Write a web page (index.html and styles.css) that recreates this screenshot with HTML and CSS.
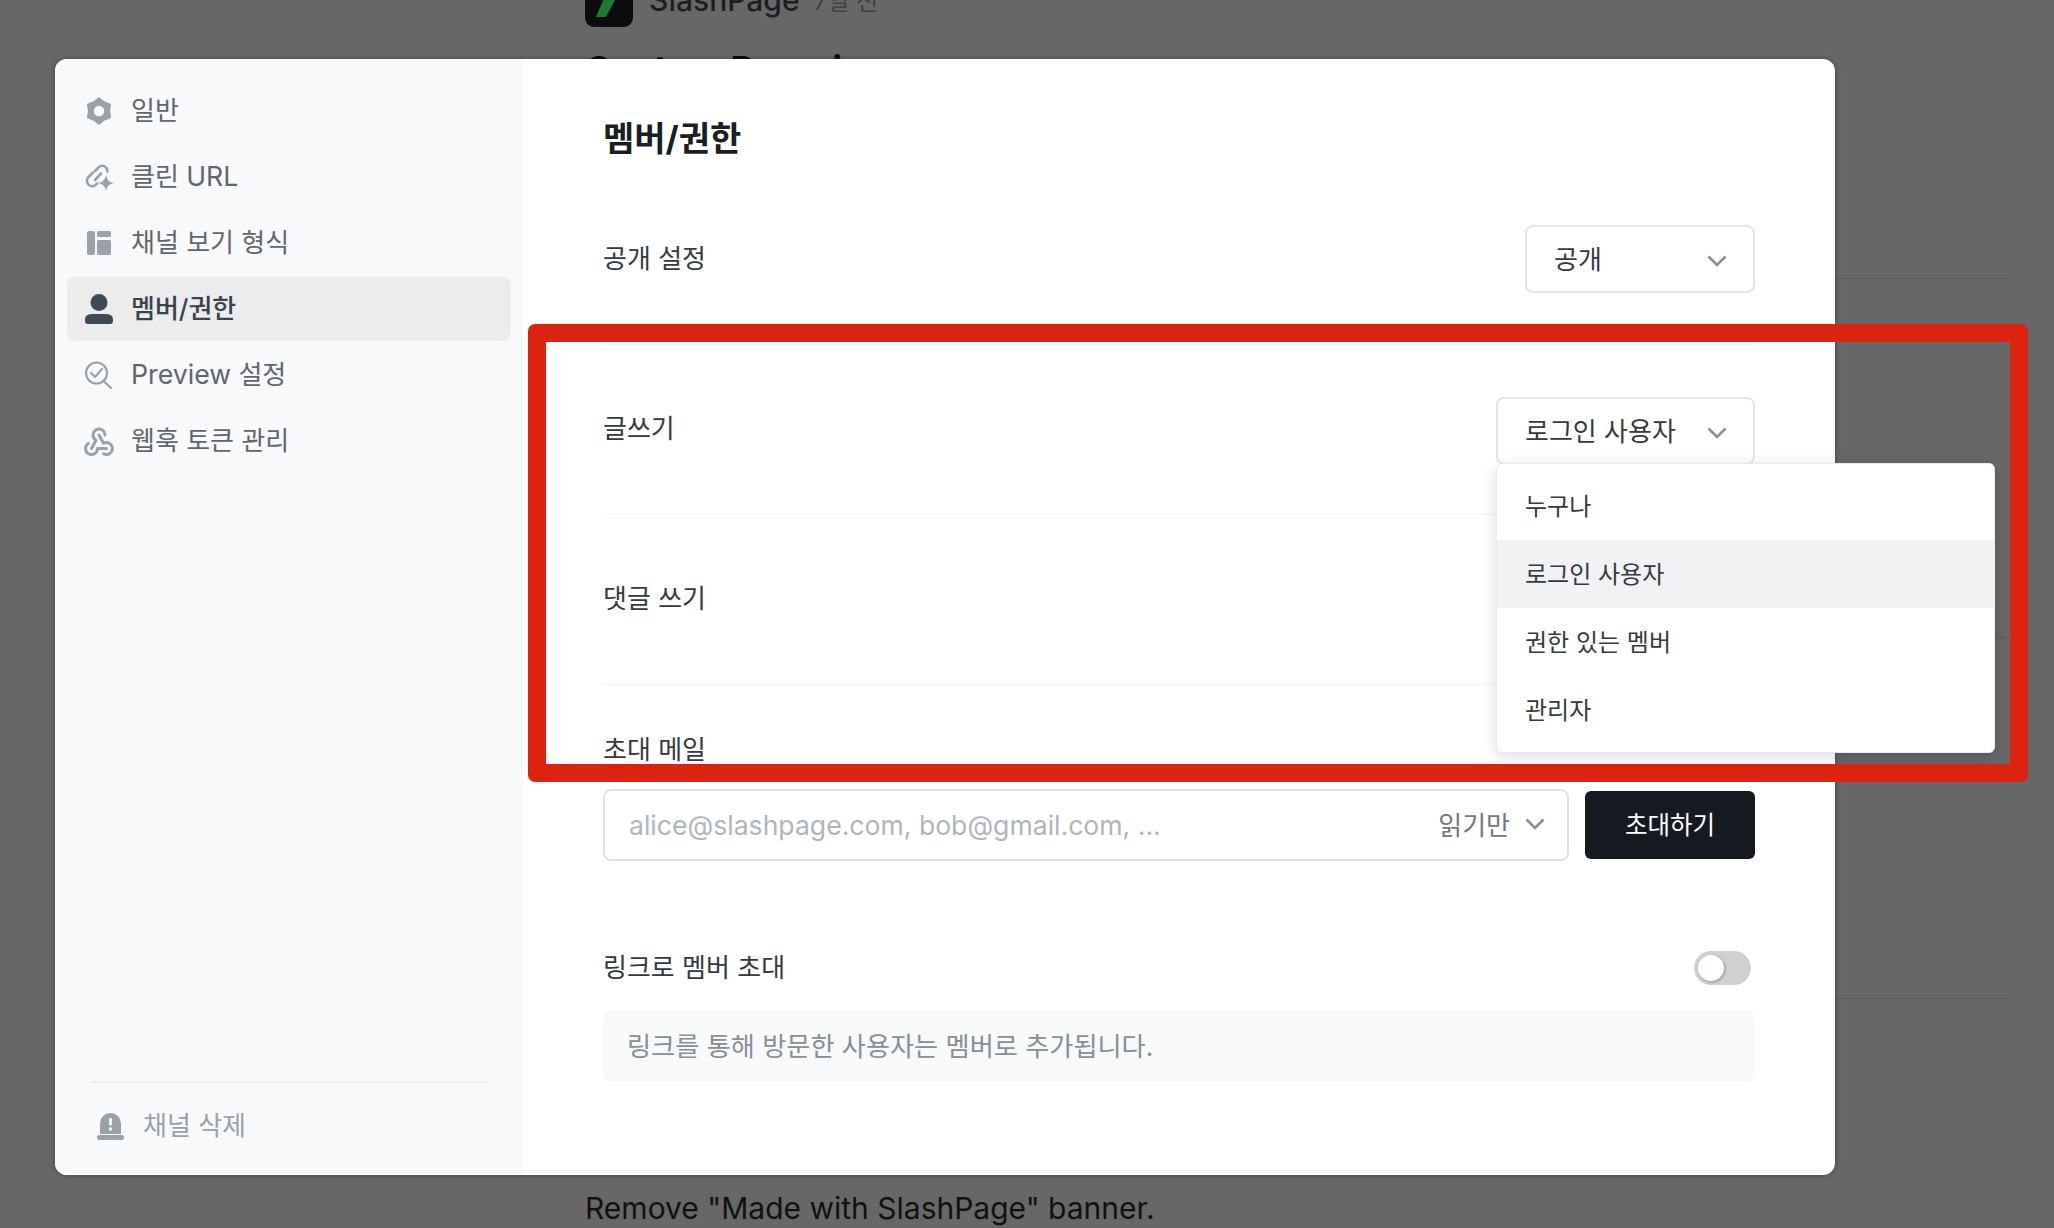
FILE: index.html
```html
<!DOCTYPE html>
<html lang="ko">
<head>
    <meta charset="UTF-8">
    <title>멤버/권한</title>
    <link rel="stylesheet" href="styles.css">
</head>
<body>
    <!-- page behind the modal -->
    <div class="page">
        <div class="page-head">
            <svg class="logo" viewBox="0 0 48 48"><rect width="48" height="48" rx="9" fill="#0a0c0e"/><polygon points="11,38 21,38 36,10 23,10" fill="#1d7a33"/></svg>
            <span class="page-name">SlashPage</span>
            <span class="page-time">7일 전</span>
        </div>
        <div class="page-section first">
            <h2>Custom Domain</h2>
        </div>
        <div class="page-section second"></div>
        <div class="page-section third"></div>
        <p class="page-foot">Remove "Made with SlashPage" banner.</p>
    </div>

    <div class="modal">
        <aside class="sidebar">
            <nav class="nav">
                <a class="nav-item">
                    <span class="nav-icon">
                        <svg width="30" height="30" viewBox="0 0 24 24"><polygon points="12,2.3 15.8,5.42 20.4,7.15 19.6,12 20.4,16.85 15.8,18.58 12,21.7 8.2,18.58 3.6,16.85 4.4,12 3.6,7.15 8.2,5.42" fill="#9aa1a9" stroke="#9aa1a9" stroke-width="2.4" stroke-linejoin="round"/><circle cx="12" cy="12" r="4.2" fill="#f8f9fa"/></svg>
                    </span>
                    일반
                </a>
                <a class="nav-item">
                    <span class="nav-icon">
                        <svg width="30" height="30" viewBox="0 0 30 30" fill="none" stroke="#9aa1a9" stroke-width="2.6" stroke-linecap="round"><path d="M11 9l3.5-3.5a5 5 0 0 1 7.5 0q1.5 1.5 1.3 4"/><path d="M9 10.5l-4.5 4.5a5.2 5.2 0 0 0 0 7.5a5 5 0 0 0 7 .5l1.5-1.5"/><path d="M11 18l6-6.5"/><path d="M22 13Q23 20 30 21Q23 22 22 29Q21 22 14 21Q21 20 22 13Z" fill="#9aa1a9" stroke="none"/></svg>
                    </span>
                    <span>클린 <span class="latin">URL</span></span>
                </a>
                <a class="nav-item">
                    <span class="nav-icon">
                        <svg width="24" height="24" viewBox="0 0 24 24" fill="#9aa1a9"><rect width="8" height="24" rx="2"/><rect x="10" width="14" height="6" rx="1.5"/><rect x="10" y="9" width="14" height="15" rx="1.5"/></svg>
                    </span>
                    채널 보기 형식
                </a>
                <a class="nav-item active">
                    <span class="nav-icon">
                        <svg width="28" height="30" viewBox="0 0 28 30" fill="#3e4a56"><circle cx="14" cy="8.5" r="8.5"/><path d="M0 25Q0 20 8 20H20Q28 20 28 25V27Q28 30 25 30H3Q0 30 0 27Z"/></svg>
                    </span>
                    멤버/권한
                </a>
                <a class="nav-item">
                    <span class="nav-icon">
                        <svg width="28" height="28" viewBox="0 0 28 28" fill="none" stroke="#9aa1a9" stroke-width="2.2" stroke-linecap="round" stroke-linejoin="round"><circle cx="11.5" cy="12" r="10.5"/><path d="M18.5 20L26 27"/><path d="M6 12l4 4 7-8"/></svg>
                    </span>
                    <span><span class="latin">Preview</span> 설정</span>
                </a>
                <a class="nav-item">
                    <span class="nav-icon">
                        <svg width="36" height="36" viewBox="0 0 24 24" fill="none" stroke="#9aa1a9" stroke-width="2" stroke-linecap="round" stroke-linejoin="round"><path d="M4.876 13.61a4 4 0 1 0 6.124 3.39h6"/><path d="M15.066 20.502a4 4 0 1 0 1.934-7.502c-.706 0-1.424 .179-2 .5l-3-5.5"/><path d="M16 8a4 4 0 1 0-8 0c0 1.506 .77 2.818 2 3.5l-3 5.5"/></svg>
                    </span>
                    웹훅 토큰 관리
                </a>
            </nav>
            <div class="sidebar-foot">
                <a class="danger-item">
                    <svg width="27" height="28" viewBox="0 0 27 28" fill="#9aa1a9"><path d="M3 22V11.5a10.5 10.5 0 0 1 21 0V22Z"/><rect y="23" width="27" height="5" rx="2.5"/><rect x="12" y="6" width="3" height="7.5" rx="1" fill="#f8f9fa"/><circle cx="13.5" cy="17" r="1.7" fill="#f8f9fa"/></svg>
                    채널 삭제
                </a>
            </div>
        </aside>

        <main class="content">
            <h1>멤버/권한</h1>

            <div class="row first-row">
                <span class="row-label">공개 설정</span>
                <button class="select select-short">공개
                    <svg class="chevron" width="20" height="12" viewBox="0 0 20 12"><polyline points="1.5,1.5 10,10 18.5,1.5"/></svg>
                </button>
            </div>

            <div class="row">
                <span class="row-label raised">글쓰기</span>
                <div class="select-wrap">
                    <button class="select">로그인 사용자
                        <svg class="chevron" width="20" height="12" viewBox="0 0 20 12"><polyline points="1.5,1.5 10,10 18.5,1.5"/></svg>
                    </button>
                    <ul class="dropdown">
                        <li>누구나</li>
                        <li class="hover">로그인 사용자</li>
                        <li>권한 있는 멤버</li>
                        <li>관리자</li>
                    </ul>
                </div>
            </div>

            <div class="row">
                <span class="row-label raised">댓글 쓰기</span>
                <button class="select">로그인 사용자
                    <svg class="chevron" width="20" height="12" viewBox="0 0 20 12"><polyline points="1.5,1.5 10,10 18.5,1.5"/></svg>
                </button>
            </div>

            <div class="invite">
                <div class="row-label">초대 메일</div>
                <div class="invite-form">
                    <div class="invite-input">
                        <span class="placeholder">alice@slashpage.com, bob@gmail.com, ...</span>
                        <span class="role">읽기만
                            <svg class="chevron" width="20" height="12" viewBox="0 0 20 12"><polyline points="1.5,1.5 10,10 18.5,1.5"/></svg>
                        </span>
                    </div>
                    <button class="invite-btn">초대하기</button>
                </div>
            </div>

            <div class="link-row">
                <span class="row-label">링크로 멤버 초대</span>
                <span class="toggle"><span class="knob"></span></span>
            </div>
            <div class="info">링크를 통해 방문한 사용자는 멤버로 추가됩니다.</div>
        </main>
    </div>

    <!-- annotation drawn on top of the screenshot -->
    <div class="highlight"></div>
</body>
</html>
```

FILE: styles.css
```css
:root {
    --text: #343a40;
    --muted: #868e96;
    --icon: #9aa1a9;
    --line: #f1f3f5;
    --border: #e3e5e8;
}

* {
    box-sizing: border-box;
}

body {
    margin: 0;
    height: 100vh;
    overflow: hidden;
    position: relative;
    background: #676767;
    color: var(--text);
    font-family: "Inter", "Noto Sans CJK KR", sans-serif;
    font-size: 26px;
}

h1, h2, p, ul {
    margin: 0;
    padding: 0;
}

/* page behind */
.page {
    margin: -21px 0 0 585px;
    width: 1424px;
}

.page-head {
    display: flex;
    align-items: flex-start;
    height: 48px;
}

.logo {
    width: 48px;
    height: 48px;
    flex-shrink: 0;
}

.page-name {
    margin: 1px 0 0 16px;
    font-size: 30px;
    font-weight: 500;
    line-height: 40px;
    color: #1c1e20;
}

.page-time {
    margin: 5px 0 0 14px;
    font-size: 24px;
    line-height: 36px;
    color: #3f4143;
}

.page-section {
    border-bottom: 1px solid #5a5a5a;
}

.page-section.first {
    height: 252px;
    padding-top: 20px;
}

.page-section.second {
    height: 359px;
}

.page-section.third {
    height: 361px;
}

.page-section h2 {
    font-size: 36px;
    font-weight: 700;
    line-height: 44px;
    color: #0c0c0c;
}

.page-foot {
    margin-top: 189px;
    font-size: 30px;
    line-height: 40px;
    color: #111;
}

/* modal */
.modal {
    position: absolute;
    left: 55px;
    top: 59px;
    width: 1780px;
    height: 1116px;
    display: flex;
    background: #fff;
    border-radius: 12px;
    box-shadow: 0 0 5px rgba(0, 0, 0, 0.35);
}

.sidebar {
    width: 468px;
    flex-shrink: 0;
    display: flex;
    flex-direction: column;
    padding: 20px 12px 0;
    background: #f8f9fa;
    border-radius: 12px 0 0 12px;
}

.nav {
    display: flex;
    flex-direction: column;
    gap: 2px;
}

.nav-item {
    display: flex;
    align-items: center;
    gap: 18px;
    height: 64px;
    padding: 0 0 5px 18px;
    border-radius: 8px;
    color: #60666d;
}

.nav-item.active {
    background: #ececed;
    color: #3a434c;
    font-weight: 500;
}

.nav-icon {
    width: 28px;
    height: 28px;
    margin-top: 5px;
    display: flex;
    align-items: center;
    justify-content: center;
    flex-shrink: 0;
}

.nav-icon svg {
    flex-shrink: 0;
}

.latin {
    font-size: 26.7px;
}

.sidebar-foot {
    margin: auto 24px 0;
    height: 94px;
    border-top: 2px solid #eceef0;
}

.danger-item {
    display: flex;
    align-items: center;
    gap: 19px;
    padding: 29px 0 0 6px;
    line-height: 28px;
    color: var(--icon);
}

.content {
    flex-grow: 1;
    padding: 58px 80px 0;
}

.content h1 {
    font-size: 34px;
    font-weight: 700;
    line-height: 44px;
    color: #1a1f24;
    margin-bottom: 64px;
}

.row {
    display: flex;
    align-items: center;
    justify-content: space-between;
    padding: 52px 0 49px;
    border-bottom: 1px solid var(--line);
}

.row.first-row {
    padding: 0 0 51px;
}

.row-label {
    line-height: 36px;
}

.row-label.raised {
    margin-bottom: 4px;
}

.select-wrap {
    position: relative;
}

.select {
    display: flex;
    align-items: center;
    justify-content: space-between;
    width: 259px;
    height: 68px;
    padding: 0 26px 3px 27px;
    background: #fff;
    border: 2px solid var(--border);
    border-radius: 8px;
    font: inherit;
    color: var(--text);
}

.select-short {
    width: 230px;
}

.chevron {
    flex-shrink: 0;
    fill: none;
    stroke: var(--muted);
    stroke-width: 2.6;
}

.select .chevron {
    margin-top: 7px;
}

.dropdown {
    position: absolute;
    left: 0;
    top: 66px;
    width: 499px;
    padding: 8px 0;
    list-style: none;
    background: #fff;
    border: 1px solid #e9ebed;
    border-radius: 6px;
    box-shadow: 0 4px 16px rgba(0, 0, 0, 0.14);
    font-size: 24px;
    z-index: 2;
}

.dropdown li {
    height: 68px;
    padding: 0 0 4px 28px;
    display: flex;
    align-items: center;
}

.dropdown li.hover {
    background: #f1f2f3;
}

.invite {
    padding-top: 47px;
}

.invite-form {
    display: flex;
    gap: 16px;
    align-items: center;
    margin-top: 21px;
}

.invite-input {
    flex-grow: 1;
    height: 72px;
    display: flex;
    align-items: center;
    justify-content: space-between;
    padding: 0 22px 0 24px;
    border: 2px solid #dfe2e5;
    border-radius: 8px;
}

.placeholder {
    color: #adb5bd;
    font-size: 26.6px;
}

.role {
    display: flex;
    align-items: center;
    gap: 15px;
    margin-bottom: 4px;
    color: #71777e;
}

.role .chevron {
    margin-top: 2px;
}

.invite-btn {
    width: 170px;
    height: 68px;
    padding: 0 0 4px;
    background: #141a1f;
    color: #fff;
    border: none;
    border-radius: 6px;
    font: inherit;
    font-size: 24.5px;
}

.link-row {
    display: flex;
    align-items: center;
    justify-content: space-between;
    margin-top: 90px;
    height: 34px;
    padding-right: 4px;
}

.toggle {
    width: 57px;
    height: 34px;
    padding: 4px;
    background: #ced0d2;
    border-radius: 17px;
}

.knob {
    display: block;
    width: 26px;
    height: 26px;
    background: #fff;
    border-radius: 50%;
    box-shadow: 1px 1px 3px rgba(0, 0, 0, 0.3);
}

.info {
    margin-top: 26px;
    height: 71px;
    padding: 0 0 4px 24px;
    display: flex;
    align-items: center;
    background: #f8f9f9;
    border-radius: 8px;
    color: var(--muted);
    font-size: 26.2px;
}

/* red annotation box */
.highlight {
    position: absolute;
    left: 528px;
    top: 324px;
    width: 1500px;
    height: 458px;
    border: 18px solid #dc2310;
    border-radius: 7px;
    z-index: 5;
}
```
